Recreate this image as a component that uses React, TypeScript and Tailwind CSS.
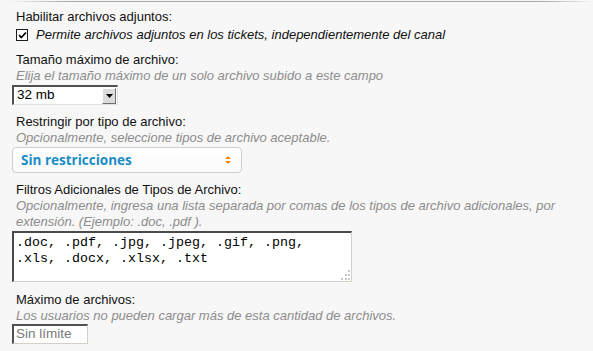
import React from "react";

const Label: React.FC<{ children: React.ReactNode }> = ({ children }) => (
  <div className="h-4 leading-4 text-[13px] text-[#111]">{children}</div>
);

const Hint: React.FC<{ children: React.ReactNode }> = ({ children }) => (
  <div className="leading-4 text-[13px] italic text-[#8c8c8c]">{children}</div>
);

const App: React.FC = () => {
  return (
    <div className="w-[593px] h-[351px] overflow-hidden bg-[#f7f7f7] font-['Liberation_Sans',Arial,sans-serif]">
      {/* línea superior */}
      <div className="mt-px h-px bg-[linear-gradient(to_right,transparent_8px,#a8a8a8_70px,#a8a8a8_540px,transparent_593px)]" />

      <div className="pl-4 pt-[7px]">
        {/* adjuntos */}
        <Label>Habilitar archivos adjuntos:</Label>
        <div className="flex items-center h-4 mt-[2px]">
          <div className="w-3 h-3 border border-[#1c1c1c] bg-white flex items-center justify-center">
            <svg width="9" height="9" viewBox="0 0 9 9">
              <path d="M1 4 L3.3 6.5 L8 1.5" stroke="#000" strokeWidth="1.8" fill="none" />
            </svg>
          </div>
          <span className="ml-2 text-[13px] italic text-[#111]">
            Permite archivos adjuntos en los tickets, independientemente del canal
          </span>
        </div>

        {/* tamaño */}
        <div className="mt-[9px]">
          <Label>Tamaño máximo de archivo:</Label>
          <Hint>Elija el tamaño máximo de un solo archivo subido a este campo</Hint>
          <div className="-ml-1 mt-px w-[106px] h-5 flex bg-white border-t-2 border-l-2 border-t-[#505050] border-l-[#505050] border-b border-r border-b-[#e0e0e0] border-r-[#e0e0e0]">
            <span className="flex-1 pl-[3px] text-[13.5px] leading-4 text-black">32 mb</span>
            <div className="w-[14px] h-4 mt-px mr-px bg-[#dcdcdc] border border-t-white border-l-white border-b-[#707070] border-r-[#707070] flex items-center justify-center">
              <svg width="7" height="4" viewBox="0 0 7 4">
                <path d="M0 0 H7 L3.5 4 Z" fill="#000" />
              </svg>
            </div>
          </div>
        </div>

        {/* restringir */}
        <div className="mt-[9px]">
          <Label>Restringir por tipo de archivo:</Label>
          <Hint>Opcionalmente, seleccione tipos de archivo aceptable.</Hint>
          <div className="-ml-1 mt-px w-[230px] h-[26px] flex items-center justify-between px-2 rounded border border-[#cfcfcf] bg-[linear-gradient(#ffffff,#fafafa)]">
            <span className="font-['Open_Sans',sans-serif] font-bold text-[13.5px] text-[#1a8cc8]">
              Sin restricciones
            </span>
            <svg width="6" height="10" viewBox="0 0 6 10" className="mr-[2px]">
              <path d="M0 4 L3 1 L6 4 Z" fill="#f08a00" />
              <path d="M0 6 L3 9 L6 6 Z" fill="#f08a00" />
            </svg>
          </div>
        </div>

        {/* filtros */}
        <div className="mt-[9px]">
          <Label>Filtros Adicionales de Tipos de Archivo:</Label>
          <Hint>
            Opcionalmente, ingresa una lista separada por comas de los tipos de archivo adicionales, por
            <br />
            extensión. (Ejemplo: .doc, .pdf ).
          </Hint>
          <div className="relative -ml-1 mt-px w-[340px] h-[51px] bg-white border-t-2 border-l-2 border-t-[#4a4a4a] border-l-[#4a4a4a] border-b border-r border-b-[#d4d0c8] border-r-[#d4d0c8] pl-[2px] pt-[2px]">
            <div className="font-['Liberation_Mono','Courier_New',monospace] text-[13.33px] leading-4 text-black whitespace-pre">
              {".doc, .pdf, .jpg, .jpeg, .gif, .png,\n.xls, .docx, .xlsx, .txt"}
            </div>
            <svg width="10" height="10" viewBox="0 0 10 10" className="absolute right-px bottom-px">
              <rect x="8" y="0" width="2" height="2" fill="#c8c8c8" />
              <rect x="5" y="4" width="2" height="2" fill="#c8c8c8" />
              <rect x="8" y="4" width="2" height="2" fill="#c8c8c8" />
              <rect x="1" y="8" width="2" height="2" fill="#c8c8c8" />
              <rect x="5" y="8" width="2" height="2" fill="#c8c8c8" />
              <rect x="8" y="8" width="2" height="2" fill="#c8c8c8" />
            </svg>
          </div>
        </div>

        {/* máximo */}
        <div className="mt-[10px]">
          <Label>Máximo de archivos:</Label>
          <Hint>Los usuarios no pueden cargar más de esta cantidad de archivos.</Hint>
          <div className="-ml-1 w-[76px] h-5 bg-white border-t-2 border-l-2 border-t-[#505050] border-l-[#505050] border-b border-r border-b-[#d4d0c8] border-r-[#d4d0c8] pl-[2px] text-[13.5px] leading-4 text-[#7a7a7a]">
            Sin límite
          </div>
        </div>
      </div>
    </div>
  );
};

export default App;
